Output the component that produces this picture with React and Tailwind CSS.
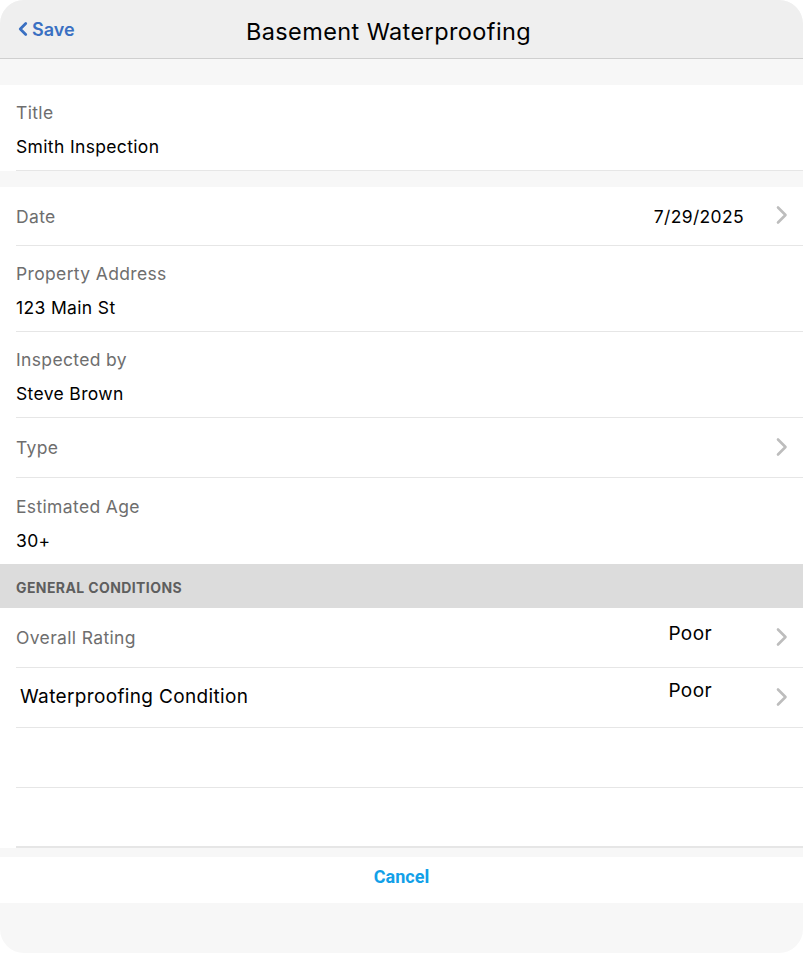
import { ChevronLeft } from 'lucide-react'

function Chevron({ className = '' }) {
  return (
    <svg viewBox="0 0 14 20" className={`w-[14px] h-[20px] shrink-0 ${className}`} fill="none">
      <path d="M3 2.5 L10.5 10 L3 17.5" stroke="#bdbdbd" strokeWidth="2.6" strokeLinecap="round" strokeLinejoin="round" />
    </svg>
  )
}

const txt = 'text-[17.5px] tracking-[0.35px]'

function FieldRow({ label, value, last }) {
  return (
    <div className="pl-4">
      <div className={`h-[86px] flex flex-col justify-center pt-[5px] ${last ? '' : 'border-b border-[#e6e6e6]'}`}>
        <div className={`${txt} text-[#6e6e6e] leading-[22px]`}>{label}</div>
        <div className={`${txt} text-black leading-[22px] mt-3`}>{value}</div>
      </div>
    </div>
  )
}

function PickRow({ label, value, dark }) {
  return (
    <div className="pl-4">
      <div className="h-[60px] flex items-center border-b border-[#e6e6e6] pr-[14px]">
        <div className={dark ? 'text-[19px] tracking-[0.35px] text-black pl-1' : `${txt} text-[#6e6e6e] pt-0.5`}>{label}</div>
        <div className="flex-1" />
        <div className={`text-[19px] tracking-[0.4px] text-black self-start mr-[63px] ${dark ? 'mt-[9px]' : 'mt-[12px]'}`}>{value}</div>
        <Chevron className="-mt-[1px]" />
      </div>
    </div>
  )
}

export default function App() {
  return (
    <div className="w-[805px] h-[953px] bg-white" style={{ fontFamily: 'Inter, "Noto Sans", sans-serif' }}>
      <div className="w-[803px] h-[953px] rounded-[24px] overflow-hidden bg-[#f7f7f7] flex flex-col">
        {/* Header */}
        <div className="h-[59px] bg-[#efefef] border-b border-[#cfcfcf] flex items-center relative shrink-0">
          <div className="flex items-center pl-3 text-[#3a70c2] font-semibold text-[18px]">
            <ChevronLeft className="w-[22px] h-[24px] -mr-0.5" strokeWidth={3} />
            <span>Save</span>
          </div>
          <div className="absolute left-0 right-0 text-center text-[23.5px] tracking-[0.4px] text-black pointer-events-none -ml-[26px] pt-[5px]">
            Basement Waterproofing
          </div>
        </div>

        <div className="h-[26px] shrink-0" />

        {/* Title section */}
        <div className="bg-white shrink-0">
          <FieldRow label="Title" value="Smith Inspection" />
        </div>

        <div className="h-[16px] shrink-0" />

        {/* Main section */}
        <div className="bg-white shrink-0">
          <div className="pl-4">
            <div className="h-[59px] flex items-center border-b border-[#e6e6e6] pr-[14px]">
              <div className={`${txt} text-[#6e6e6e] pt-0.5`}>Date</div>
              <div className="flex-1" />
              <div className={`${txt} text-black mr-[31px] pt-0.5`}>7/29/2025</div>
              <Chevron className="-mt-[2px]" />
            </div>
          </div>
          <FieldRow label="Property Address" value="123 Main St" />
          <FieldRow label="Inspected by" value="Steve Brown" />
          <div className="pl-4">
            <div className="h-[60px] flex items-center border-b border-[#e6e6e6] pr-[14px]">
              <div className={`${txt} text-[#6e6e6e] pt-0.5`}>Type</div>
              <div className="flex-1" />
              <Chevron className="-mt-[2px]" />
            </div>
          </div>
          <FieldRow label="Estimated Age" value="30+" last />

          {/* Section header */}
          <div className="h-[44px] bg-[#dcdcdc] flex items-center pl-4 pt-0.5 text-[14px] font-bold text-[#5e5e5e] tracking-[0.4px]">
            GENERAL CONDITIONS
          </div>

          <PickRow label="Overall Rating" value="Poor" />
          <PickRow label="Waterproofing Condition" value="Poor" dark />
          <div className="pl-4">
            <div className="h-[60px] border-b border-[#e6e6e6]" />
          </div>
          <div className="pl-4">
            <div className="h-[60px] border-b-2 border-[#e6e6e6]" />
          </div>
        </div>

        <div className="h-[9px] shrink-0" />

        {/* Cancel */}
        <div className="h-[46px] bg-white flex justify-center pt-[6px] shrink-0">
          <span className="text-[#12a0e8] font-bold text-[18px]" style={{ fontFamily: 'Roboto, sans-serif' }}>
            Cancel
          </span>
        </div>

        <div className="flex-1" />
      </div>
    </div>
  )
}
